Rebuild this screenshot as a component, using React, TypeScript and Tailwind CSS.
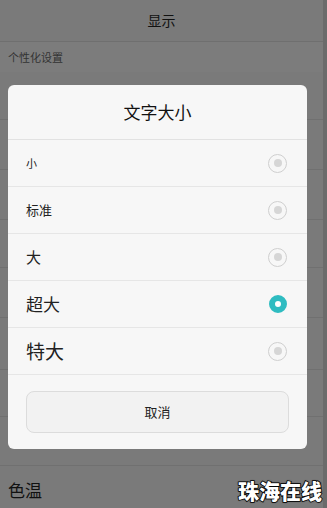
import React from "react";

const font = { fontFamily: '"Noto Sans CJK SC", "Noto Sans", sans-serif' };

const options = [
  { label: "小", size: "text-[11px]" },
  { label: "标准", size: "text-[13px]" },
  { label: "大", size: "text-[15px]" },
  { label: "超大", size: "text-[17px]" },
  { label: "特大", size: "text-[19px]" },
];

const Radio = ({ on }: { on: boolean }) =>
  on ? (
    <span className="h-[18px] w-[18px] rounded-full border-[6px] border-[#2fbcc1] bg-white" />
  ) : (
    <span className="h-[19px] w-[19px] rounded-full border border-[#cfcfcf] flex items-center justify-center">
      <span className="h-[8px] w-[8px] rounded-full bg-[#d6d6d6]" />
    </span>
  );

export default function App() {
  return (
    <div className="relative h-[508px] w-[327px] overflow-hidden flex bg-[#7a7a7a]" style={font}>
      <div className="w-[323px] flex flex-col">
        <header className="h-[42px] flex items-center justify-center border-b border-[#6f6f6f] text-[14px] text-[#111]">
          显示
        </header>
        <div className="h-[30px] flex items-center px-2 text-[11px] text-[#333] bg-[#7c7c7c]">个性化设置</div>
        {[48, 50, 50, 48, 50, 52, 47, 49].map((h, i) => (
          <div key={i} className="border-b border-[#707070]" style={{ height: h }} />
        ))}
        <div className="flex-1 flex items-center px-2 pt-[6px] text-[17px] text-[#111]">色温</div>
      </div>
      <div className="w-[4px] bg-[#6b6b6b]" />

      <div className="absolute left-[8px] top-[85px] w-[299px] rounded-md bg-[#f7f7f7] flex flex-col">
        <div className="h-[55px] flex items-center justify-center text-[17px] text-[#111] border-b border-[#e2e2e2]">
          文字大小
        </div>
        {options.map((o, i) => (
          <div
            key={o.label}
            className="h-[47px] flex items-center justify-between pl-[18px] pr-[20px] border-b border-[#e6e6e6]"
          >
            <span className={`${o.size} text-[#222]`}>{o.label}</span>
            <Radio on={i === 3} />
          </div>
        ))}
        <div className="px-[18px] pt-[16px] pb-[16px]">
          <div className="h-[42px] rounded-lg border border-[#dcdcdc] bg-[#f2f2f2] flex items-center justify-center text-[13px] text-[#222]">
            取消
          </div>
        </div>
      </div>

      <div
        className="absolute right-[5px] top-[476px] text-[21px] leading-[28px] font-black text-white tracking-[0px]"
        style={{ WebkitTextStroke: "1.5px #000", paintOrder: "stroke fill", textShadow: "0 0 2px #000, 0 0 1px #000" }}
      >
        珠海在线
      </div>
    </div>
  );
}
